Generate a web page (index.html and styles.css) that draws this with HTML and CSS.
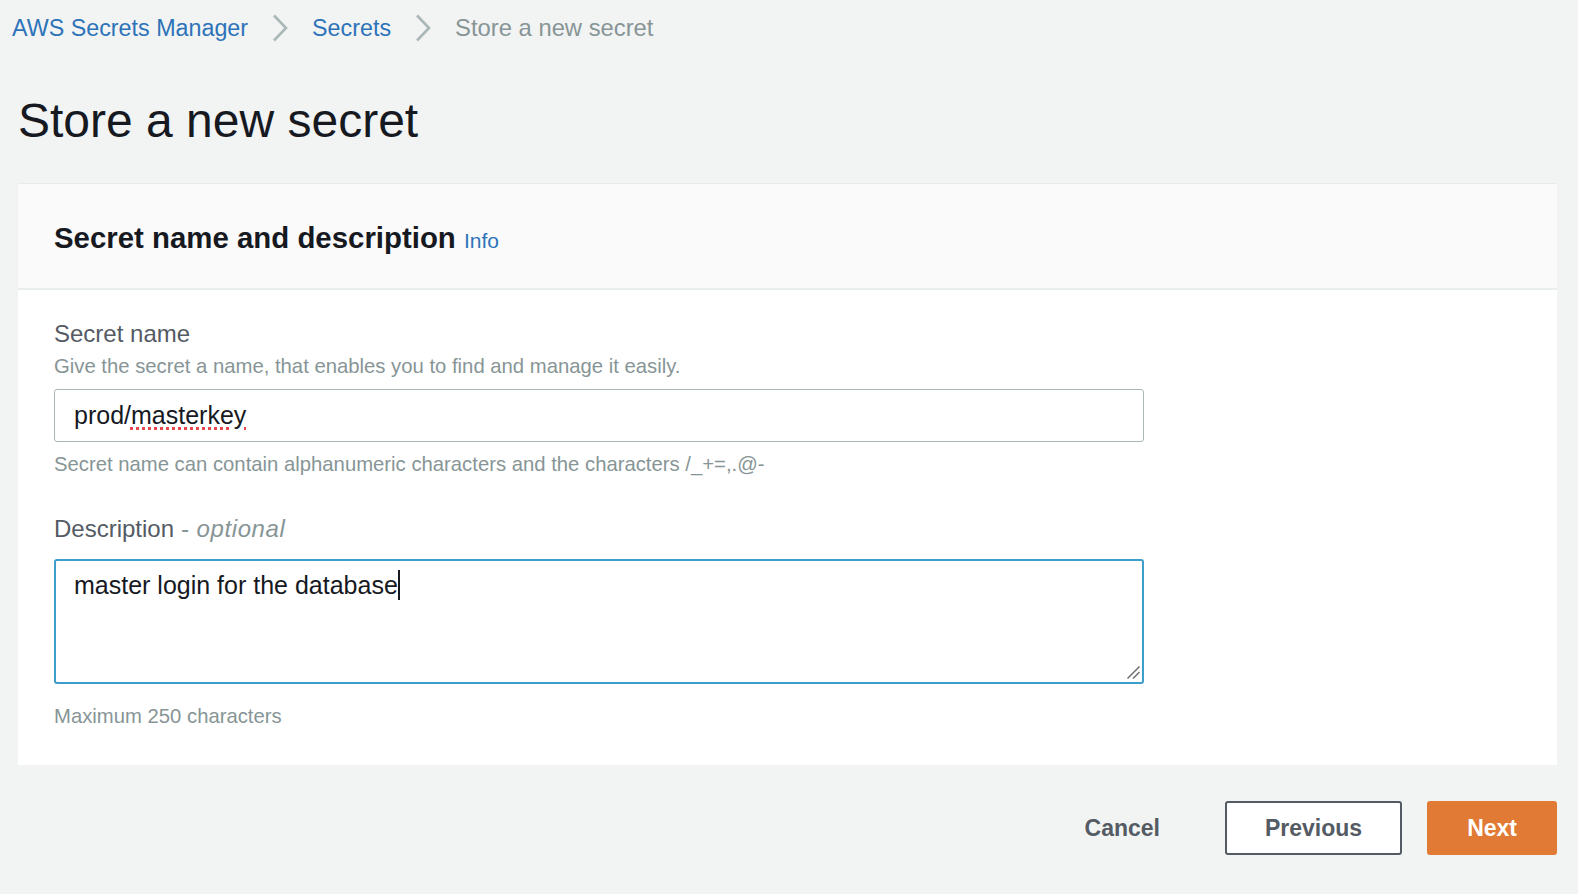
FILE: index.html
```html
<!DOCTYPE html>
<html lang="en">
<head>
<meta charset="utf-8">
<title>Store a new secret</title>
<link rel="stylesheet" href="styles.css">
</head>
<body>
<nav class="breadcrumb">
  <a class="crumb-link" href="#">AWS Secrets Manager</a>
  <svg class="chevron" width="16" height="28" viewBox="0 0 16 28"><polyline points="2,1.5 14,14 2,26.5" fill="none" stroke="#aab7b8" stroke-width="2.6"/></svg>
  <a class="crumb-link" href="#">Secrets</a>
  <svg class="chevron" width="16" height="28" viewBox="0 0 16 28"><polyline points="2,1.5 14,14 2,26.5" fill="none" stroke="#aab7b8" stroke-width="2.6"/></svg>
  <span class="crumb-current">Store a new secret</span>
</nav>

<main class="content">
  <h1 class="page-title">Store a new secret</h1>

  <section class="panel">
    <header class="panel-header">
      <h2 class="panel-title">Secret name and description <a class="info-link" href="#">Info</a></h2>
    </header>
    <div class="panel-body">
      <div class="field-label">Secret name</div>
      <div class="field-hint">Give the secret a name, that enables you to find and manage it easily.</div>
      <div class="text-input">prod/<span class="misspelled">masterkey</span></div>
      <div class="field-constraint">Secret name can contain alphanumeric characters and the characters /_+=,.@-</div>

      <div class="field-label field-label-spaced">Description <span class="optional">- optional</span></div>
      <div class="text-area">master login for the database<span class="caret"></span>
        <svg class="resize-handle" width="13" height="13" viewBox="0 0 13 13"><line x1="12.5" y1="0.5" x2="0.5" y2="12.5" stroke="#6b6b6b" stroke-width="1.4"/><line x1="12.5" y1="6" x2="6" y2="12.5" stroke="#6b6b6b" stroke-width="1.4"/></svg>
      </div>
      <div class="field-constraint field-max">Maximum 250 characters</div>
    </div>
  </section>

  <div class="actions">
    <button class="btn btn-link" type="button">Cancel</button>
    <button class="btn btn-normal" type="button">Previous</button>
    <button class="btn btn-primary" type="button">Next</button>
  </div>
</main>
</body>
</html>
```

FILE: styles.css
```css
html, body {
  margin: 0;
  padding: 0;
}

body {
  background: #f2f3f3;
  font-family: "Liberation Sans", Arial, sans-serif;
  color: #16191f;
  width: 1578px;
  height: 894px;
  overflow: hidden;
}

.breadcrumb {
  display: flex;
  align-items: center;
  padding: 14px 0 0 12px;
  font-size: 23.3px;
  line-height: 28px;
}

.crumb-link {
  color: #2d73b9;
  text-decoration: none;
}

.chevron {
  margin: 0 24px;
  display: block;
}

.crumb-current {
  color: #879596;
  font-size: 23.8px;
}

.content {
  padding: 0 21px 0 18px;
}

.page-title {
  margin: 51px 0 0 0;
  font-size: 48px;
  line-height: 56px;
  font-weight: 400;
  color: #16191f;
}

.panel {
  margin-top: 34px;
  background: #ffffff;
  border-top: 1px solid #e9ebeb;
}

.panel-header {
  background: #fafafa;
  padding: 37px 36px 33px 36px;
  border-bottom: 2px solid #eaeded;
}

.panel-title {
  margin: 0;
  font-size: 29.4px;
  line-height: 34px;
  font-weight: 700;
  color: #16191f;
}

.info-link {
  font-size: 21px;
  line-height: 20px;
  font-weight: 400;
  color: #2d73b9;
  text-decoration: none;
}

.panel-body {
  padding: 30px 36px 37px 36px;
}

.field-label {
  font-size: 24px;
  line-height: 28px;
  color: #545b64;
}

.field-label-spaced {
  margin-top: 39px;
}

.optional {
  font-style: italic;
  color: #879596;
  letter-spacing: 0.6px;
}

.field-hint {
  margin-top: 6px;
  font-size: 20.3px;
  line-height: 24px;
  color: #879596;
}

.text-input {
  box-sizing: border-box;
  margin-top: 11px;
  width: 1090px;
  height: 53px;
  padding: 10px 18px 11px 19px;
  border: 1px solid #aab7b8;
  border-radius: 3px;
  background: #ffffff;
  font-size: 25px;
  line-height: 30px;
  color: #16191f;
}

.misspelled {
  text-decoration: underline dotted #e5484d;
  text-decoration-thickness: 3px;
  text-underline-offset: 3px;
}

.field-constraint {
  margin-top: 10px;
  font-size: 20.3px;
  line-height: 24px;
  color: #879596;
}

.field-max {
  margin-top: 20px;
}

.text-area {
  position: relative;
  box-sizing: border-box;
  margin-top: 16px;
  width: 1090px;
  height: 125px;
  padding: 9px 17px 0 18px;
  border: 2px solid #3f9dca;
  border-radius: 3px;
  background: #ffffff;
  font-size: 25px;
  line-height: 30px;
  color: #16191f;
}

.caret {
  display: inline-block;
  width: 2px;
  height: 30px;
  background: #16191f;
  vertical-align: -6px;
}

.resize-handle {
  position: absolute;
  right: 2px;
  bottom: 3px;
}

.actions {
  display: flex;
  justify-content: flex-end;
  gap: 25px;
  margin-top: 36px;
}

.btn {
  box-sizing: border-box;
  height: 54px;
  padding: 0 38px;
  border: 2px solid transparent;
  border-radius: 3px;
  font-family: "Liberation Sans", Arial, sans-serif;
  font-size: 23px;
  font-weight: 700;
  line-height: 28px;
  background: transparent;
  color: #545b64;
  cursor: pointer;
}

.btn-normal {
  background: #ffffff;
  border-color: #545b64;
}

.btn-primary {
  background: #e07a34;
  border-color: #e07a34;
  color: #ffffff;
}
```
